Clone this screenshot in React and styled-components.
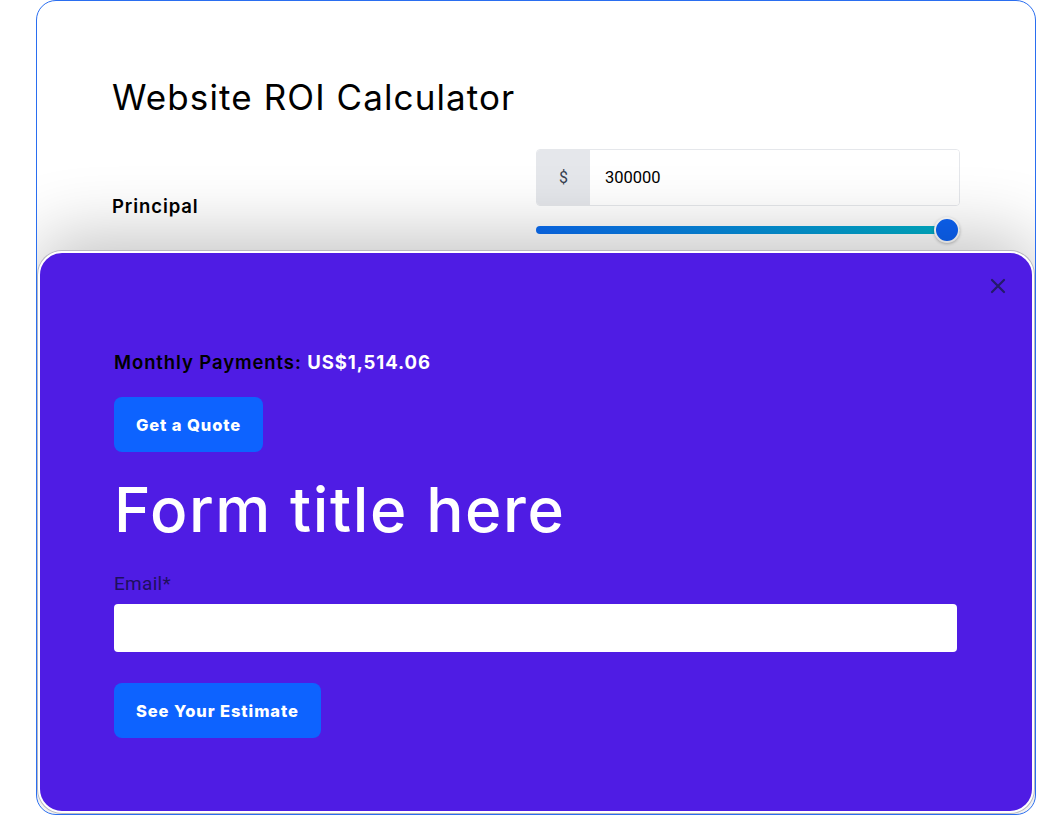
import React, { useState } from "react";
import styled, { createGlobalStyle } from "styled-components";

const GlobalStyle = createGlobalStyle`
  html, body { margin: 0; padding: 0; background: #ffffff; }
  body { font-family: "Inter", "Liberation Sans", sans-serif; }
  * { box-sizing: border-box; }
`;

const Page = styled.div`
  width: 1045px;
  height: 825px;
  padding-left: 36px;
  overflow: hidden;
`;

const Card = styled.div`
  position: relative;
  width: 1000px;
  height: 815px;
  border: 1px solid #2a6ef0;
  border-radius: 20px;
  padding: 74px 75px 0 75px;
  overflow: hidden;
  background: #fff;
`;

const Title = styled.h1`
  margin: 0 0 30px 0;
  font-family: "Inter", sans-serif;
  font-weight: 400;
  font-size: 35px;
  line-height: 44px;
  color: #000;
  letter-spacing: 1.1px;
`;

const FieldRow = styled.div`
  display: grid;
  grid-template-columns: 1fr 424px;
  align-items: start;
`;

const Label = styled.div`
  font-family: "Inter", sans-serif;
  font-weight: 600;
  font-size: 18.5px;
  line-height: 24px;
  color: #000;
  padding-top: 45px;
  letter-spacing: 0.9px;
`;

const Control = styled.div`
  display: flex;
  flex-direction: column;
  gap: 12px;
`;

const InputGroup = styled.div`
  display: flex;
  height: 57px;
  border: 1px solid #e5e7eb;
  border-radius: 4px;
  overflow: hidden;
`;

const Prefix = styled.div`
  width: 53px;
  background: #e5e7eb;
  display: flex;
  align-items: center;
  justify-content: center;
  font-family: "Roboto", sans-serif;
  font-size: 16px;
  color: #374151;
`;

const ValueInput = styled.input`
  flex: 1;
  border: none;
  outline: none;
  padding: 0 15px;
  font-family: "Roboto", sans-serif;
  font-size: 16.5px;
  color: #000;
  background: #fff;
`;

const SliderWrap = styled.div`
  position: relative;
  height: 24px;
  display: flex;
  align-items: center;
`;

const Track = styled.div`
  height: 8px;
  width: 100%;
  border-radius: 4px;
  background: linear-gradient(90deg, #0b6cf2 0%, #00b3c6 100%);
`;

const Thumb = styled.div`
  position: absolute;
  right: 0;
  top: -1px;
  width: 26px;
  height: 26px;
  border-radius: 50%;
  background: #0d63f5;
  border: 2px solid #fff;
  box-shadow: 0 1px 3px rgba(0, 0, 0, 0.25);
`;

const Overlay = styled.div`
  position: absolute;
  left: 1px;
  right: 1px;
  top: 250px;
  bottom: 1px;
  background: #4f1ce4;
  border: 2px solid #fff;
  border-radius: 24px;
  box-shadow: 0 0 0 1px #b8b8c0, 0 -14px 70px rgba(0, 0, 0, 0.24);
  padding: 96px 75px 0 74px;
  display: flex;
  flex-direction: column;
  align-items: flex-start;
`;

const Close = styled.button`
  position: absolute;
  top: 21px;
  right: 22px;
  width: 24px;
  height: 24px;
  padding: 0;
  border: none;
  background: transparent;
  display: flex;
  align-items: center;
  justify-content: center;
  cursor: pointer;
`;

const Payment = styled.div`
  font-family: "Inter", sans-serif;
  font-weight: 600;
  font-size: 18.5px;
  line-height: 26px;
  color: #000;
  letter-spacing: 0.9px;
`;

const Amount = styled.span`
  color: #fff;
  font-weight: 700;
`;

const Button = styled.button`
  margin-top: ${(p) => p.$mt}px;
  height: 55px;
  padding: 0 22px;
  border: none;
  border-radius: 8px;
  background: #0d63ff;
  color: #fff;
  font-family: "Inter", sans-serif;
  font-weight: 800;
  font-size: 16.5px;
  letter-spacing: 0.9px;
  cursor: pointer;
`;

const FormTitle = styled.h2`
  margin: 14px 0 0 0;
  font-family: "Inter", sans-serif;
  font-weight: 500;
  font-size: 62px;
  line-height: 88px;
  color: #fff;
  letter-spacing: 1.6px;
`;

const EmailLabel = styled.label`
  margin-top: 18px;
  font-family: "Roboto", sans-serif;
  font-size: 19px;
  line-height: 24px;
  color: #1e0f5e;
  letter-spacing: 0.3px;
`;

const EmailInput = styled.input`
  margin-top: 8px;
  width: 100%;
  height: 48px;
  border: none;
  border-radius: 4px;
  background: #fff;
  outline: none;
  padding: 0 12px;
  font-size: 16px;
`;

export default function App() {
  const [value, setValue] = useState("300000");
  return (
    <>
      <GlobalStyle />
      <Page>
        <Card>
          <Title>Website ROI Calculator</Title>
          <FieldRow>
            <Label>Principal</Label>
            <Control>
              <InputGroup>
                <Prefix>$</Prefix>
                <ValueInput value={value} onChange={(e) => setValue(e.target.value)} />
              </InputGroup>
              <SliderWrap>
                <Track />
                <Thumb />
              </SliderWrap>
            </Control>
          </FieldRow>
          <Overlay>
            <Close aria-label="Close">
              <svg width="16" height="16" viewBox="0 0 16 16">
                <path d="M2 2 L14 14 M14 2 L2 14" stroke="#241a6b" strokeWidth="2.2" strokeLinecap="round" />
              </svg>
            </Close>
            <Payment>
              Monthly Payments: <Amount>US$1,514.06</Amount>
            </Payment>
            <Button $mt={22}>Get a Quote</Button>
            <FormTitle>Form title here</FormTitle>
            <EmailLabel>Email*</EmailLabel>
            <EmailInput />
            <Button $mt={31}>See Your Estimate</Button>
          </Overlay>
        </Card>
      </Page>
    </>
  );
}
